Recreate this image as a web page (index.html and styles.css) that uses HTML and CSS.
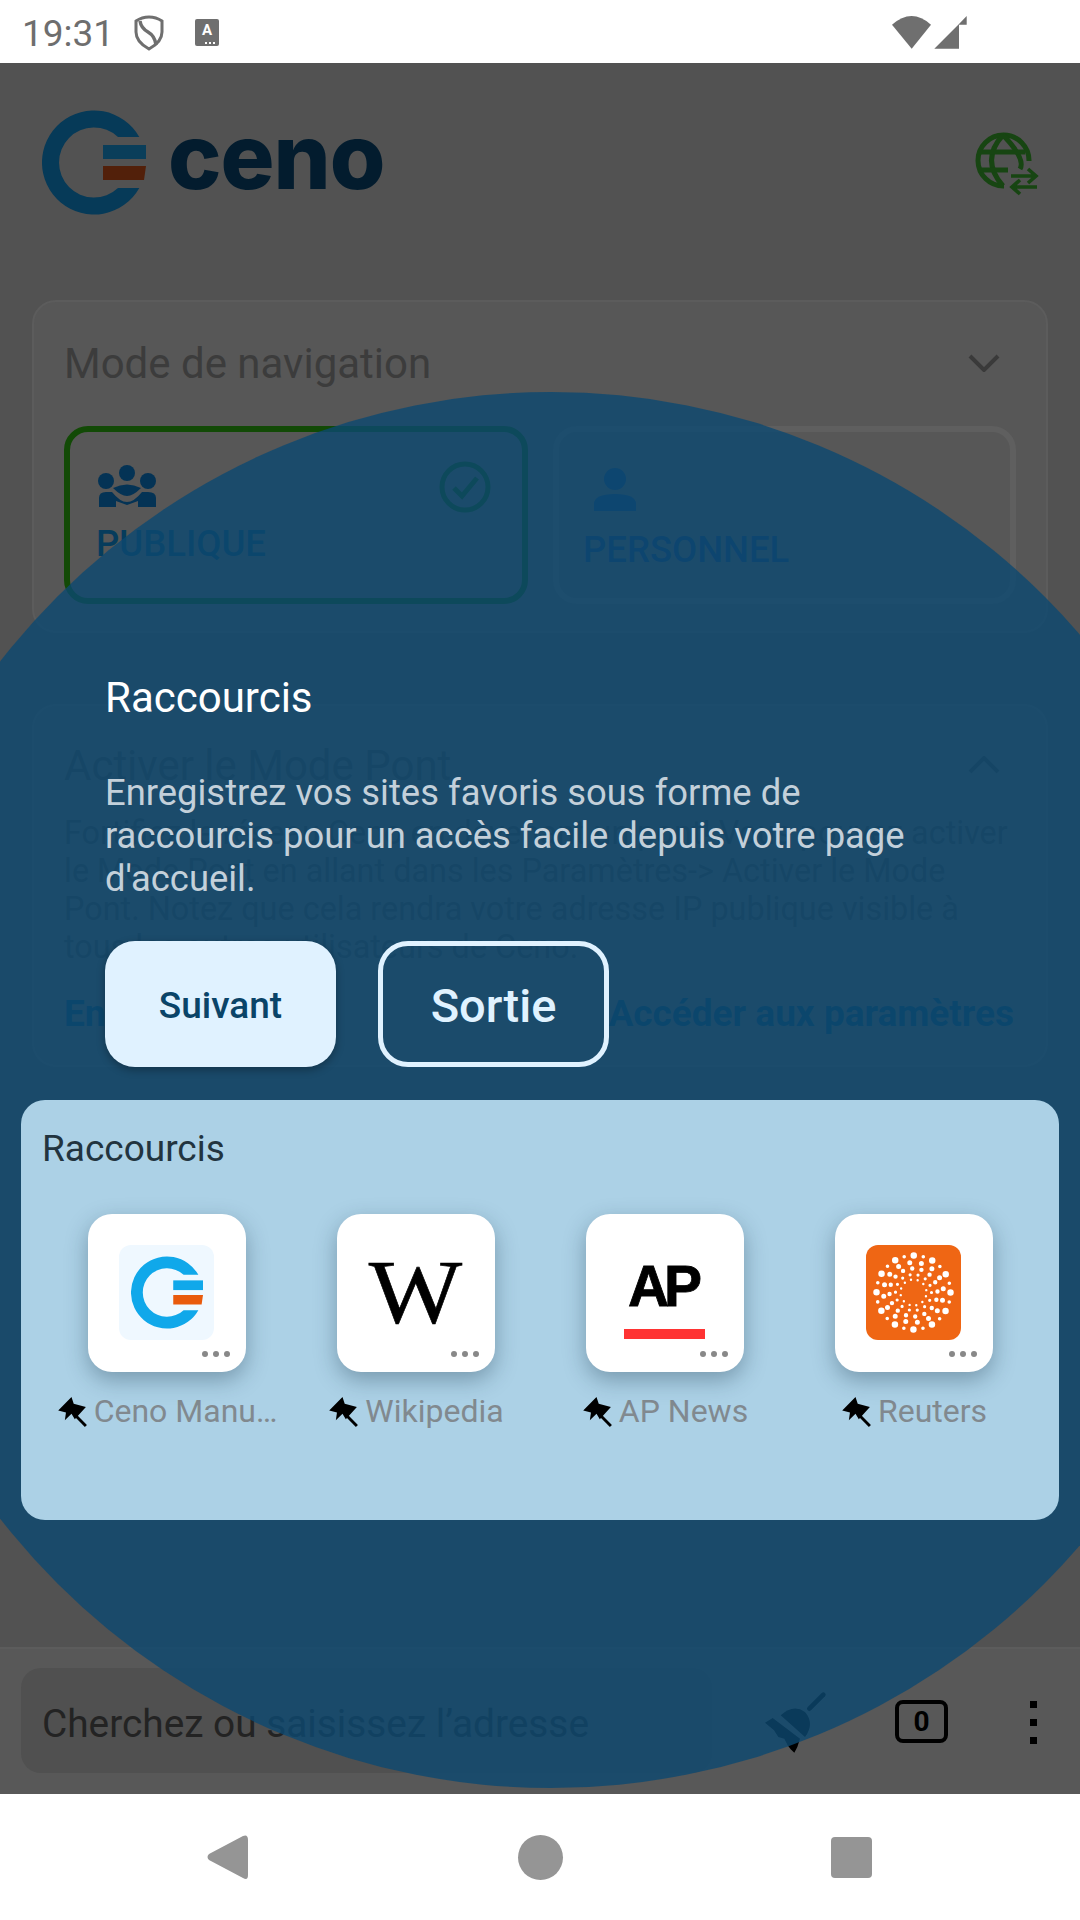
FILE: index.html
```html
<!DOCTYPE html>
<html lang="fr">
<head>
<meta charset="utf-8">
<title>Ceno</title>
<link rel="stylesheet" href="styles.css">
</head>
<body>
<div class="screen">
  <header class="status">
    <span class="time">19:31</span>
    <svg class="shield" viewBox="0 0 30 36"><path d="M15 2 Q22 2 28 6 V17 Q28 27 15 34 Q2 27 2 17 V6 Q8 2 15 2Z" fill="none" stroke="#6f6f6f" stroke-width="3"/><path d="M6 6 Q7 13 14 17 Q21 21 22 30" fill="none" stroke="#6f6f6f" stroke-width="3.4"/></svg>
    <div class="keyboard"><span class="keyboard-a">A</span><span class="keyboard-dots"></span></div>
    <svg class="signals" viewBox="0 0 210 60"><path d="M41.7 46.7 L22 22.7 Q41.7 5.3 61 22.7Z" fill="#6f6f6f"/><path d="M64.3 46.7 L89 22 V46.7Z M89 22 L96.7 14 V22.7 H89Z" fill="#6f6f6f"/></svg>
  </header>

  <main class="app">
    <div class="brand">
      <svg class="logo" viewBox="0 0 104 105"><path class="logo-ring" d="M97.3 27 A52 52 0 1 0 97.3 78 L76 78 A35 35 0 1 1 76 27Z"/><rect class="logo-top" x="61" y="35" width="43" height="14"/><path class="logo-bottom" d="M61 56 H104 L102 70 H61Z"/></svg>
      <span class="wordmark">ceno</span>
      <svg class="globe" viewBox="0 0 90 80"><g fill="none" stroke="#174512" stroke-width="5"><path d="M69 36 A25.5 25.5 0 1 0 44 61"/><path d="M43 10 Q20 35 43 61 M43 10 Q66 34 60 44"/><path d="M21 27 H65 M20 45 H48"/><path d="M51 51 H76 M68 44 L76 51 L68 58 M77 62 H52 M60 55 L52 62 L60 69" stroke-width="3.6"/></g></svg>
    </div>

    <section class="card card-mode">
      <div class="card-head">
        <h2 class="card-title">Mode de navigation</h2>
        <svg class="chevron" viewBox="0 0 32 18"><path d="M2 2 L16 16 L30 2" fill="none" stroke="#3a3a3a" stroke-width="4"/></svg>
      </div>
      <div class="modes">
        <div class="mode mode-on">
          <svg class="people" viewBox="0 0 85 70"><circle cx="42" cy="22" r="8"/><circle cx="21" cy="30" r="8"/><circle cx="63" cy="30" r="8"/><path d="M28 37 Q42 30 56 37 Q48 45 42 45 Q36 45 28 37Z"/><path d="M14 56 V47 Q14 41 21 41 H27 Q35 51 42 51 Q49 51 57 41 H63 Q71 41 71 47 V56 H53 V50 L42 54 L31 50 V56Z"/></svg>
          <svg class="tick" viewBox="0 0 52 52"><circle cx="26" cy="26" r="23" fill="none" stroke="#124a06" stroke-width="5"/><path d="M15 27 L23 35 L38 17" fill="none" stroke="#124a06" stroke-width="5"/></svg>
          <span class="mode-name">PUBLIQUE</span>
        </div>
        <div class="mode mode-off">
          <svg class="person" viewBox="0 0 44 44"><circle cx="22" cy="11" r="11"/><path d="M1 43 V36 Q1 26 22 26 Q43 26 43 36 V43Z"/></svg>
          <span class="mode-name mode-name-off">PERSONNEL</span>
        </div>
      </div>
    </section>

    <section class="card card-bridge">
      <div class="card-head">
        <h2 class="card-title">Activer le Mode Pont</h2>
        <svg class="chevron" viewBox="0 0 32 18"><path d="M2 16 L16 2 L30 16" fill="none" stroke="#3a3a3a" stroke-width="4"/></svg>
      </div>
      <p class="bridge-text">Fortifiez le réseau Ceno en devenant un pont! Vous pouvez activer le Mode Pont en allant dans les Paramètres-&gt; Activer le Mode Pont. Notez que cela rendra votre adresse IP publique visible à tous les autres utilisateurs de Ceno.</p>
      <div class="bridge-links"><span>En savoir plus</span><span>Accéder aux paramètres</span></div>
    </section>

    <div class="spacer"></div>

    <footer class="toolbar">
      <div class="search">Cherchez ou saisissez l’adresse</div>
      <svg class="broom" viewBox="0 0 300 255"><path d="M178 80 L220 38" stroke="#000" stroke-width="14" stroke-linecap="round"/><path d="M92 100 Q130 65 165 90 Q195 125 165 165Z"/><path d="M45 122 L68 108 L150 170 L142 195 L133 212 L122 202 L113 190 L103 170 L85 165 L72 145Z"/></svg>
      <div class="tabs">0</div>
      <div class="kebab"><i></i><i></i><i></i></div>
    </footer>
  </main>

  <nav class="navbar">
    <svg class="nav-back" viewBox="0 0 41 45"><path d="M36 1 Q41 -1 41 5 V40 Q41 46 36 43 L2 25 Q-1 22 2 19Z" fill="#959595"/></svg>
    <div class="nav-home"></div>
    <div class="nav-recent"></div>
  </nav>

  <div class="spot"></div>

  <div class="tour">
    <h3 class="tour-title">Raccourcis</h3>
    <p class="tour-text">Enregistrez vos sites favoris sous forme de raccourcis pour un accès facile depuis votre page d'accueil.</p>
    <div class="tour-actions">
      <button class="btn btn-next">Suivant</button>
      <button class="btn btn-exit">Sortie</button>
    </div>
  </div>

  <section class="panel">
    <h3 class="panel-title">Raccourcis</h3>
    <div class="shortcuts">
      <div class="shortcut">
        <div class="tile">
          <div class="tile-img img-ceno">
            <svg class="ceno-mini" viewBox="0 0 104 105"><path class="mini-ring" d="M97.3 27 A52 52 0 1 0 97.3 78 L76 78 A35 35 0 1 1 76 27Z"/><rect class="mini-ring" x="61" y="35" width="43" height="14"/><path class="mini-bar" d="M61 56 H104 L102 70 H61Z"/></svg>
          </div>
          <span class="more"><i></i><i></i><i></i></span>
        </div>
        <div class="label"><svg class="pin" viewBox="0 0 28 28"><path d="M2 13 L14 1 L16 7 L27 10 L17 21 L14 16 L8 22 L9 15Z"/><path d="M17 17 L27 27" stroke="#000" stroke-width="2.6"/></svg><span class="label-text">Ceno Manu…</span></div>
      </div>
      <div class="shortcut">
        <div class="tile">
          <div class="tile-img"><span class="wiki">W</span></div>
          <span class="more"><i></i><i></i><i></i></span>
        </div>
        <div class="label"><svg class="pin" viewBox="0 0 28 28"><path d="M2 13 L14 1 L16 7 L27 10 L17 21 L14 16 L8 22 L9 15Z"/><path d="M17 17 L27 27" stroke="#000" stroke-width="2.6"/></svg><span class="label-text">Wikipedia</span></div>
      </div>
      <div class="shortcut">
        <div class="tile">
          <div class="tile-img img-ap"><span class="ap">AP</span><span class="ap-bar"></span></div>
          <span class="more"><i></i><i></i><i></i></span>
        </div>
        <div class="label"><svg class="pin" viewBox="0 0 28 28"><path d="M2 13 L14 1 L16 7 L27 10 L17 21 L14 16 L8 22 L9 15Z"/><path d="M17 17 L27 27" stroke="#000" stroke-width="2.6"/></svg><span class="label-text">AP News</span></div>
      </div>
      <div class="shortcut">
        <div class="tile">
          <div class="tile-img img-reuters">
            <svg class="reuters" viewBox="0 0 95 95" fill="none" stroke="#fff" stroke-linecap="round">
              <circle cx="47.5" cy="47.5" r="37" stroke-width="6.5" stroke-dasharray="0 19.37"/>
              <circle cx="47.5" cy="47.5" r="37" stroke-width="3.6" stroke-dasharray="0 19.37" stroke-dashoffset="9.68"/>
              <circle cx="47.5" cy="47.5" r="30" stroke-width="5" stroke-dasharray="0 11.78" stroke-dashoffset="4"/>
              <circle cx="47.5" cy="47.5" r="24" stroke-width="4.4" stroke-dasharray="0 9.42" stroke-dashoffset="2"/>
              <circle cx="47.5" cy="47.5" r="18" stroke-width="3.2" stroke-dasharray="0 8.08"/>
              <circle cx="47.5" cy="47.5" r="13" stroke-width="2.4" stroke-dasharray="0 6.81" stroke-dashoffset="3"/>
            </svg>
          </div>
          <span class="more"><i></i><i></i><i></i></span>
        </div>
        <div class="label"><svg class="pin" viewBox="0 0 28 28"><path d="M2 13 L14 1 L16 7 L27 10 L17 21 L14 16 L8 22 L9 15Z"/><path d="M17 17 L27 27" stroke="#000" stroke-width="2.6"/></svg><span class="label-text">Reuters</span></div>
      </div>
    </div>
  </section>
</div>
</body>
</html>
```

FILE: styles.css
```css
* { box-sizing: border-box; }
html, body { margin: 0; padding: 0; }
body { font-family: Roboto, "Liberation Sans", sans-serif; background: #fff; }
h2, h3, p { margin: 0; font-weight: 400; }

.screen { position: relative; width: 1080px; height: 1920px; overflow: hidden; display: flex; flex-direction: column; }

/* status bar */
.status { height: 63px; flex: none; background: #fff; display: flex; align-items: center; padding-left: 22px; }
.time { font-size: 37px; color: #6e6e6e; width: 112px; padding-top: 3px; }
.shield { width: 30px; height: 36px; margin-top: 2px; }
.keyboard { width: 24px; height: 27px; margin-left: 31px; margin-top: 1px; background: #6f6f6f; border-radius: 2px; position: relative; display: flex; justify-content: center; }
.keyboard-a { color: #fff; font-size: 15px; font-weight: 700; line-height: 22px; }
.keyboard-dots { position: absolute; right: 4px; bottom: 2px; width: 10px; height: 2px; background: repeating-linear-gradient(90deg, #fff 0 2px, transparent 2px 4px); }
.signals { width: 210px; height: 60px; margin-left: auto; }

/* app */
.app { flex: 1; min-height: 0; background: #525252; display: flex; flex-direction: column; }
.brand { height: 237px; flex: none; display: flex; align-items: flex-start; padding: 47px 0 0 42px; position: relative; }
.logo { width: 104px; height: 105px; flex: none; }
.logo-ring { fill: #063a58; }
.logo-top { fill: #0a3e5a; }
.logo-bottom { fill: #52200a; }
.wordmark { font-family: Inter, Lato, sans-serif; font-weight: 800; font-size: 90px; line-height: 105px; letter-spacing: -1px; color: #031c2e; margin: -6px 0 0 22px; }
.globe { width: 90px; height: 80px; margin-left: auto; margin-right: 30px; margin-top: 15px; flex: none; }

.card { margin: 0 32px; background: #575757; border: 2px solid #5c5c5c; border-radius: 24px; padding: 0 30px; flex: none; }
.card-head { display: flex; justify-content: space-between; align-items: center; height: 72px; padding-right: 16px; }
.card-title { font-size: 42px; color: #3c3c3c; }
.chevron { width: 32px; height: 18px; }

.card-mode { height: 333px; padding-top: 25px; }
.modes { display: flex; gap: 25px; margin-top: 27px; }
.mode { position: relative; width: 463px; height: 178px; border: 6px solid #5f5f5f; border-radius: 24px; flex: none; }
.mode-on { width: 464px; border-color: #124a06; }
.people { position: absolute; left: 15px; top: 19px; width: 85px; height: 70px; fill: #043355; }
.tick { position: absolute; right: 31px; top: 29px; width: 52px; height: 52px; }
.person { position: absolute; left: 34px; top: 36px; width: 44px; height: 44px; fill: #0f3c70; }
.mode-name { position: absolute; left: 26px; top: 91px; font-size: 36.5px; font-weight: 500; color: #063c5c; line-height: 42px; }
.mode-name-off { left: 24px; top: 97px; color: #10386a; }

.card-bridge { height: 363px; margin-top: 71px; padding-top: 23px; }
.bridge-text { font-size: 32.4px; line-height: 38px; color: #3c3c3c; margin-top: 13px; }
.bridge-links { display: flex; justify-content: space-between; font-size: 37px; font-weight: 700; color: #063c5c; margin-top: 26px; margin-right: 2px; }

.spacer { flex: 1; }

.toolbar { height: 147px; flex: none; background: #585858; border-top: 2px solid #5c5c5c; display: flex; align-items: flex-start; padding: 19px 0 0 21px; }
.search { width: 691px; height: 105px; background: #505050; border-radius: 20px; font-size: 38.8px; line-height: 111px; padding-left: 21px; color: #232323; flex: none; }
.broom { width: 100px; height: 85px; margin: 14px 0 0 38px; fill: #000; flex: none; }
.tabs { width: 53px; height: 43px; border: 4px solid #000; border-radius: 8px; margin: 32px 0 0 45px; font-size: 28px; font-weight: 700; text-align: center; line-height: 35px; color: #000; flex: none; }
.kebab { display: flex; flex-direction: column; gap: 11px; margin: 33px 0 0 82px; }
.kebab i { display: block; width: 7px; height: 7px; background: #000; }

/* nav bar */
.navbar { height: 126px; flex: none; background: #fff; display: flex; justify-content: space-between; align-items: center; padding: 0 208px 0 207px; }
.nav-back { width: 41px; height: 45px; }
.nav-home { width: 45px; height: 45px; margin-left: 2px; border-radius: 50%; background: #959595; }
.nav-recent { width: 41px; height: 41px; border-radius: 4px; background: #959595; }

/* coach-mark overlay */
.spot { position: absolute; left: -147px; top: 392px; width: 1396px; height: 1396px; border-radius: 50%; background: rgba(12, 73, 113, 0.8); }
.tour { position: absolute; left: 105px; top: 671px; width: 820px; }
.tour-title { font-size: 42px; line-height: 54px; color: #fff; }
.tour-text { font-size: 36.4px; line-height: 43px; color: #c3d0da; margin: 46px 0 0; width: 810px; }
.tour-actions { display: flex; gap: 42px; margin-top: 41px; }
.btn { width: 231px; height: 126px; border-radius: 30px; font-family: Roboto, sans-serif; font-weight: 500; padding: 2px 0 0; }
.btn-next { background: #e0f2ff; border: 0; color: #0a4468; font-size: 37px; box-shadow: 0 3px 8px rgba(0,0,0,.3); }
.btn-exit { background: transparent; border: 5px solid #e0f2ff; color: #e0f2ff; font-size: 47px; }

.panel { position: absolute; left: 21px; top: 1100px; width: 1038px; height: 420px; background: #acd1e6; border-radius: 24px; padding: 24px 21px 0; }
.panel-title { font-size: 37px; line-height: 50px; color: #22343f; }
.shortcuts { display: grid; grid-template-columns: repeat(4, 249px); margin-top: 40px; }
.shortcut { display: flex; flex-direction: column; align-items: center; }
.tile { position: relative; width: 158px; height: 158px; background: #fff; border-radius: 24px; box-shadow: 0 8px 22px rgba(20, 50, 70, .35); display: flex; align-items: flex-start; justify-content: center; padding-top: 31px; }
.tile-img { width: 95px; height: 95px; border-radius: 12px; display: flex; align-items: center; justify-content: center; }
.img-ceno { background: #eff8ff; }
.ceno-mini { width: 72px; height: 73px; }
.mini-ring { fill: #10a8ea; }
.mini-bar { fill: #e95a0c; }
.wiki { font-family: "Liberation Serif", serif; font-size: 99px; line-height: 95px; color: #000; -webkit-text-stroke: 0.7px #000; transform: scaleY(.91); }
.img-ap { flex-direction: column; justify-content: flex-start; }
.ap { font-family: "Liberation Sans", sans-serif; font-weight: 700; font-size: 57px; line-height: 42px; letter-spacing: -5px; color: #000; -webkit-text-stroke: 0.8px #000; margin-top: 20px; margin-left: -4px; }
.ap-bar { width: 81px; height: 10px; background: #ff3333; margin-top: 22px; flex: none; }
.img-reuters { background: #ef6614; }
.reuters { width: 95px; height: 95px; }
.more { position: absolute; right: 16px; bottom: 15px; display: flex; gap: 5px; }
.more i { display: block; width: 6px; height: 6px; border-radius: 50%; background: #888; }
.label { display: flex; align-items: center; gap: 7px; margin-top: 21px; }
.pin { width: 31px; height: 31px; fill: #000; flex: none; }
.label-text { font-size: 32px; line-height: 36px; color: #81898f; white-space: nowrap; }
```
